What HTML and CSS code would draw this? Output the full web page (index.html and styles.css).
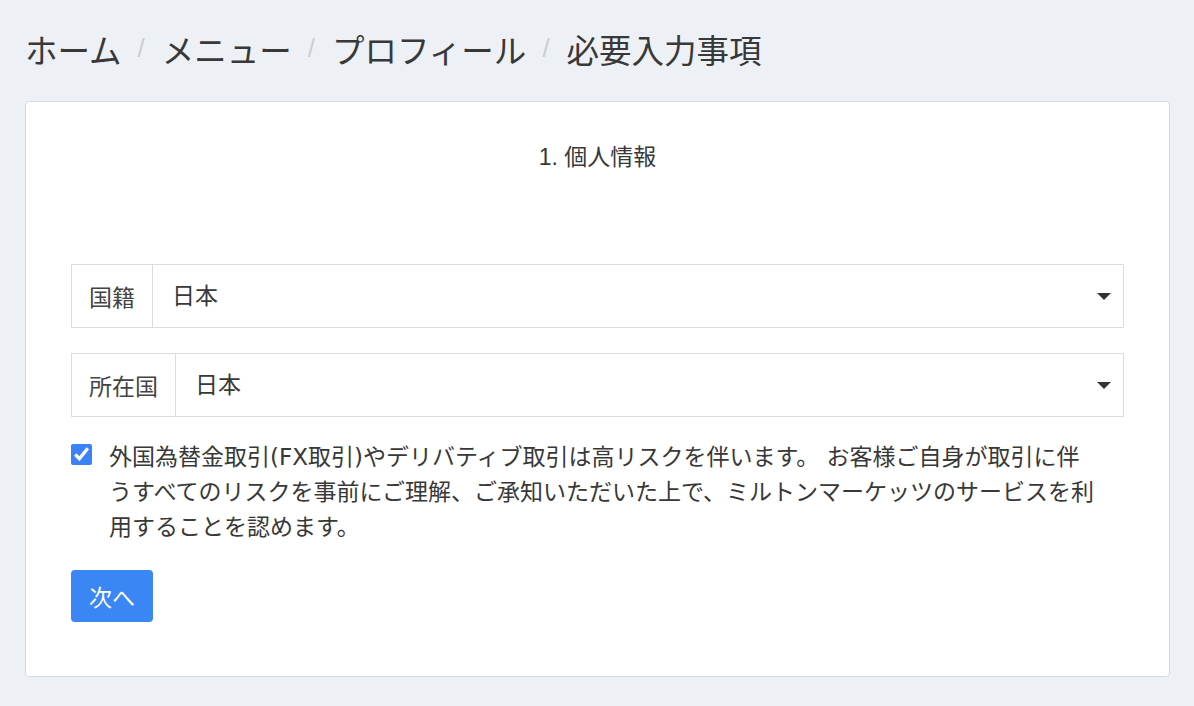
FILE: index.html
```html
<!DOCTYPE html>
<html lang="ja">
  <head>
    <meta charset="UTF-8">
    <meta name="viewport" content="width=device-width">
    <title>必要入力事項</title>
    <link rel="stylesheet" href="styles.css">
  </head>
  <body>
    <nav class="breadcrumb">
      <ul>
        <li><a href="#">ホーム</a></li>
        <li><a href="#">メニュー</a></li>
        <li><a href="#">プロフィール</a></li>
        <li class="is-active"><a href="#">必要入力事項</a></li>
      </ul>
    </nav>

    <form class="card" name="profileForm">
      <h2 class="card-title">1. 個人情報</h2>

      <div class="field">
        <label class="field-label" for="nationality">国籍</label>
        <div class="select-wrap">
          <select id="nationality" name="nationality">
            <option>日本</option>
          </select>
        </div>
      </div>

      <div class="field">
        <label class="field-label" for="residence">所在国</label>
        <div class="select-wrap">
          <select id="residence" name="residence">
            <option>日本</option>
          </select>
        </div>
      </div>

      <label class="agree">
        <input type="checkbox" name="agree" checked>
        <span class="agree-text">外国為替金取引(FX取引)やデリバティブ取引は高リスクを伴います。 お客様ご自身が取引に伴うすべてのリスクを事前にご理解、ご承知いただいた上で、ミルトンマーケッツのサービスを利用することを認めます。</span>
      </label>

      <div class="actions">
        <button type="button" class="btn-next">次へ</button>
      </div>
    </form>
  </body>
</html>
```

FILE: styles.css
```css
html, body {
  margin: 0;
  background-color: #edf0f5;
  color: #383838;
  font-family: "Liberation Sans", "Noto Sans CJK JP", sans-serif;
}

body {
  padding: 22px 24px 0 25px;
}

.breadcrumb ul {
  list-style: none;
  margin: 0;
  padding: 0;
  display: flex;
  align-items: center;
  height: 52px;
}

.breadcrumb li {
  display: flex;
  align-items: center;
  font-size: 32.5px;
}

.breadcrumb li + li::before {
  content: "/";
  color: #c9cdd3;
  font-size: 26px;
  padding: 0 17px 0 16px;
}

.breadcrumb a {
  color: #383838;
  text-decoration: none;
}

.card {
  margin-top: 27px;
  background-color: white;
  border: 1px solid #d6dae0;
  border-radius: 4px;
  padding: 39px 45px 54px 45px;
  display: flex;
  flex-direction: column;
}

.card-title {
  margin: 0 0 91px 0;
  text-align: center;
  font-size: 23px;
  font-weight: normal;
  line-height: 32px;
  color: #383838;
}

.field {
  display: flex;
  height: 64px;
  margin-bottom: 25px;
}

.field-label {
  display: flex;
  align-items: center;
  padding: 0 17px;
  font-size: 23px;
  border: 1px solid #dcdcdc;
  color: #444;
}

.select-wrap {
  flex: 1;
  position: relative;
  border: 1px solid #dcdcdc;
  border-left: none;
}

.select-wrap::after {
  content: "";
  position: absolute;
  right: 12px;
  top: 28px;
  border-left: 7px solid transparent;
  border-right: 7px solid transparent;
  border-top: 7px solid #333;
  pointer-events: none;
}

.select-wrap select {
  appearance: none;
  -webkit-appearance: none;
  width: 100%;
  height: 100%;
  border: none;
  background: transparent;
  padding: 0 19px;
  font-family: "Liberation Sans", "Noto Sans CJK JP", sans-serif;
  font-size: 23px;
  color: #383838;
  outline: none;
}

.agree {
  display: flex;
  align-items: flex-start;
  gap: 17px;
  margin-top: -2px;
  font-size: 23px;
  line-height: 35px;
  color: #383838;
}

.agree input {
  flex: none;
  width: 21px;
  height: 21px;
  margin: 4px 0 0 0;
  accent-color: #3a82f6;
}

.agree-text {
  width: 991px;
  font-family: "DejaVu Sans", "Noto Sans CJK JP", sans-serif;
}

.actions {
  margin-top: 25px;
}

.btn-next {
  width: 82px;
  height: 52px;
  border: none;
  border-radius: 4px;
  background-color: #3a86f4;
  color: white;
  font-family: "Liberation Sans", "Noto Sans CJK JP", sans-serif;
  font-size: 23px;
  cursor: pointer;
}
```
